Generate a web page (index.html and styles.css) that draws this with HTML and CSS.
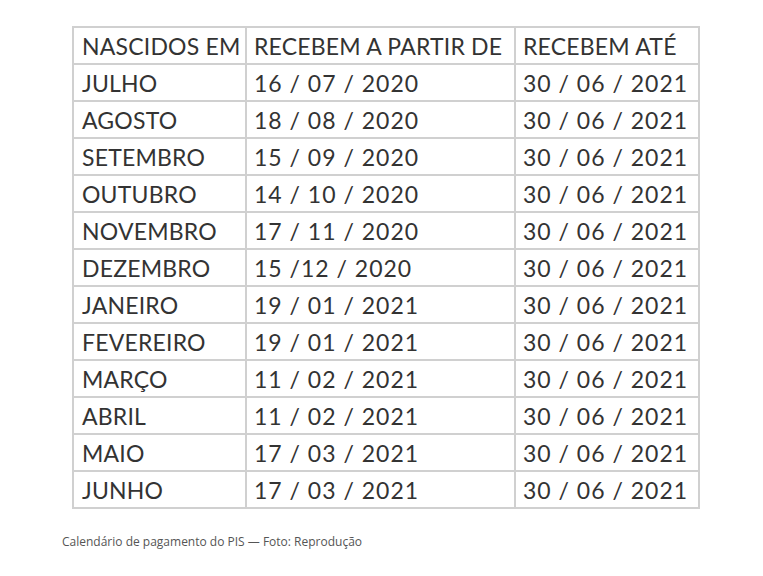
FILE: index.html
```html
<!DOCTYPE html>
<html lang="pt">
<head>
<meta charset="utf-8">
<link rel="stylesheet" href="styles.css">
</head>
<body>
<figure class="fig">
  <table class="cal">
    <tr><td>NASCIDOS EM</td><td>RECEBEM A PARTIR DE</td><td>RECEBEM ATÉ</td></tr>
    <tr><td>JULHO</td><td>16 / 07 / 2020</td><td>30 / 06 / 2021</td></tr>
    <tr><td>AGOSTO</td><td>18 / 08 / 2020</td><td>30 / 06 / 2021</td></tr>
    <tr><td>SETEMBRO</td><td>15 / 09 / 2020</td><td>30 / 06 / 2021</td></tr>
    <tr><td>OUTUBRO</td><td>14 / 10 / 2020</td><td>30 / 06 / 2021</td></tr>
    <tr><td>NOVEMBRO</td><td>17 / 11 / 2020</td><td>30 / 06 / 2021</td></tr>
    <tr><td>DEZEMBRO</td><td>15 /12 / 2020</td><td>30 / 06 / 2021</td></tr>
    <tr><td>JANEIRO</td><td>19 / 01 / 2021</td><td>30 / 06 / 2021</td></tr>
    <tr><td>FEVEREIRO</td><td>19 / 01 / 2021</td><td>30 / 06 / 2021</td></tr>
    <tr><td>MARÇO</td><td>11 / 02 / 2021</td><td>30 / 06 / 2021</td></tr>
    <tr><td>ABRIL</td><td>11 / 02 / 2021</td><td>30 / 06 / 2021</td></tr>
    <tr><td>MAIO</td><td>17 / 03 / 2021</td><td>30 / 06 / 2021</td></tr>
    <tr><td>JUNHO</td><td>17 / 03 / 2021</td><td>30 / 06 / 2021</td></tr>
  </table>
  <figcaption class="cap">Calendário de pagamento do PIS — Foto: Reprodução</figcaption>
</figure>
</body>
</html>
```
FILE: styles.css
```css
html, body { margin: 0; padding: 0; background: #fff; }
.fig { margin: 0; padding: 26px 0 0 72px; }
.cal {
  border-collapse: collapse;
  font-family: Lato, "Open Sans", sans-serif;
  font-size: 23px;
  color: #333;
  table-layout: fixed;
  width: 626px;
}
.cal td {
  border: 2px solid #d0d0d0;
  height: 35px;
  padding: 2px 0 0 7px;
  line-height: 33px;
  white-space: nowrap;
  letter-spacing: 0.2px;
  box-sizing: border-box;
  vertical-align: middle;
}
.cal tr { height: 37px; }
.cal td:nth-child(1) { width: 173px; padding-left: 8px; }
.cal td:nth-child(2) { width: 269px; }
.cal td:nth-child(3) { width: 184px; }
.cal td:nth-child(2),
.cal td:nth-child(3) { letter-spacing: 1px; }
.cal tr:first-child td:nth-child(2),
.cal tr:first-child td:nth-child(3) { letter-spacing: 0.2px; }
.cap {
  margin: 24px 0 0 -10px;
  font-family: "Open Sans", sans-serif;
  font-size: 12px;
  color: #555;
}
```
